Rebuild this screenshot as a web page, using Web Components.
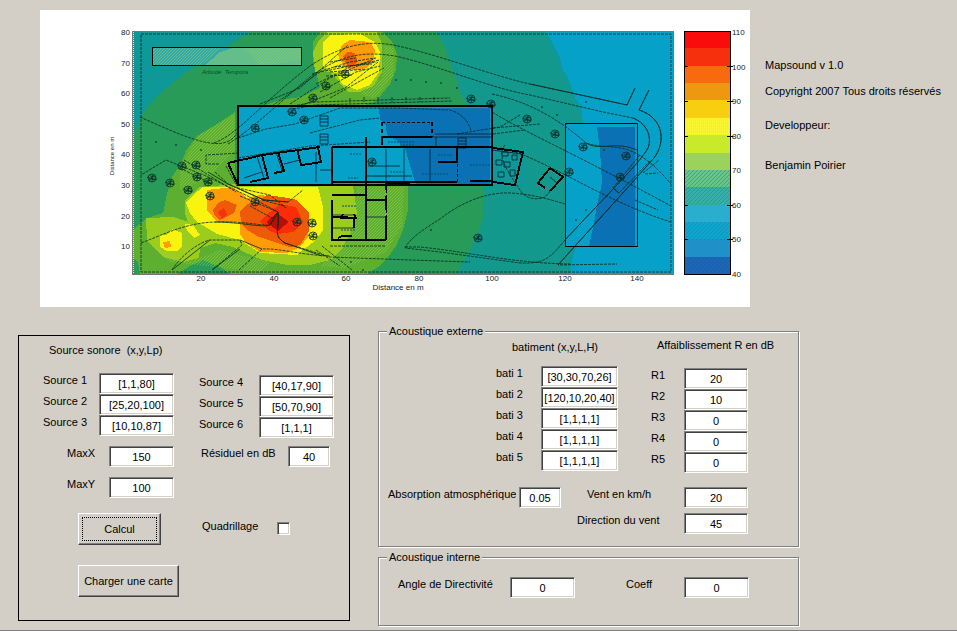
<!DOCTYPE html>
<html lang="fr">
<head>
<meta charset="utf-8">
<title>Mapsound</title>
<style>
  body {
    margin: 0;
    background: #d3cfc6;
    color: #000;
    font: 11px/14px "Liberation Sans", Arial, sans-serif;
  }
</style>
</head>
<body>
<mapsound-app></mapsound-app>

<script>
const sharedStyle = `
:host { display: block; box-sizing: border-box; }
* { box-sizing: border-box; }
`;

function ensure(name, ctor) {
  if (!customElements.get(name)) {
    customElements.define(name, ctor);
  }
}

/* label + text box, or label + tick box with type="checkbox" */
class SoundField extends HTMLElement {
  constructor() {
    super();
    const root = this.attachShadow({ mode: "open" });
    root.innerHTML = `
      <style>
        ${sharedStyle}
        :host { display: flex; align-items: flex-start; }
        label { flex: none; width: var(--label-width, 56px); white-space: nowrap; }
        input {
          appearance: none;
          margin: 0;
          border: 1px solid;
          border-color: #808080 #fff #fff #808080;
          border-radius: 0;
          box-shadow: inset 1px 1px #404040, inset -1px -1px #d4d0c8;
          background: #fff;
        }
        input[type="text"] {
          width: var(--field-width, 75px);
          height: 21px;
          padding: 0 1px;
          font: inherit;
          color: inherit;
          text-align: center;
        }
        input[type="checkbox"] { width: 13px; height: 13px; margin-top: 3px; }
        input[type="checkbox"]:checked { background: #404040; }
      </style>
      <label for="field"></label><input id="field">
    `;
    this.input = root.querySelector("input");
    this.label = root.querySelector("label");
  }
  connectedCallback() {
    this.label.textContent = this.getAttribute("label") || "";
    this.input.type = this.getAttribute("type") || "text";
    if (this.input.type === "text") {
      this.input.value = this.getAttribute("value") || "";
    }
  }
}

class SoundButton extends HTMLElement {
  constructor() {
    super();
    const root = this.attachShadow({ mode: "open" });
    root.innerHTML = `
      <style>
        ${sharedStyle}
        button {
          width: var(--button-width, 101px);
          height: 32px;
          padding: 3px;
          border: 1px solid;
          border-color: #fff #404040 #404040 #fff;
          border-radius: 0;
          box-shadow: inset -1px -1px #808080;
          background: #d3cfc6;
          color: inherit;
          font: inherit;
          white-space: nowrap;
          display: block;
        }
        span { display: flex; align-items: center; justify-content: center; height: 24px; }
        :host([current]) span { border: 1px dotted #000; }
      </style>
      <button type="button"><span><slot></slot></span></button>
    `;
  }
}

class SoundGroup extends HTMLElement {
  constructor() {
    super();
    const root = this.attachShadow({ mode: "open" });
    root.innerHTML = `
      <style>
        ${sharedStyle}
        fieldset {
          margin: 0;
          min-width: 0;
          padding: 0 9px var(--group-bottom, 12px);
          border: 1px solid #808080;
          box-shadow: 1px 1px #fff, inset 1px 1px #fff;
        }
        legend { padding: 0 2px; margin-left: -1px; background: #d3cfc6; }
      </style>
      <fieldset><legend></legend><slot></slot></fieldset>
    `;
  }
  connectedCallback() {
    this.shadowRoot.querySelector("legend").textContent = this.getAttribute("legend");
  }
}

/* noise level bands, lowest first */
const areas = [
  ["#289b58", "133,32 673,32 673,274 133,274"],
  ["#0f9898", "133,32 250,32 240,38 228,46 214,54 200,64 182,75 168,87 158,95 150,104 143,113 137,125 133,136"],
  ["#0f9898", "436,32 442,42 447,52 450,64 456,78 460,92 467,105 483,160 483,217 478,234 470,250 463,262 457,274 673,274 673,32"],
  ["#06a1c8", "546,32 553,44 560,58 562,68 568,78 572,88 575,98 581,106 583,123 584,180 577,245 573,256 570,274 673,274 673,32"],
  ["#5db02f", "235,112 235,186 408,186 408,210 403,230 396,246 388,257 378,267 367,274 230,274 220,267 203,260 190,266 177,274 140,274 138,262 133,258 133,230 147,218 163,213 167,194 172,177 180,165 187,150 185,152 197,136 214,126"],
  ["#5db02f", "262,106 280,100 300,97 320,88 313,60 313,42 320,32 382,32 392,42 397,54 396,70 390,84 382,94 373,103 360,106"],
  ["#9ccc1c", "313,52 318,42 327,32 377,32 382,44 382,72 373,86 360,92 348,92 330,72 315,72"],
  ["#9ccc1c", "185,200 200,187 238,184 353,186 357,213 351,232 343,247 330,260 310,265 287,265 262,260 233,247 215,243 200,248 199,258 183,262 163,257 147,240 146,218 173,217 188,222 185,213"],
  ["#f8f410", "323,42 330,35 360,34 375,42 380,52 379,72 370,85 357,90 342,84 337,74 323,66"],
  ["#f8f410", "186,203 192,196 203,187 318,187 323,207 323,230 316,240 303,250 297,255 260,253 240,240 217,234 204,226 197,222 190,213"],
  ["#f8f410", "160,235 166,235 172,229 182,233 182,246 178,251 167,251 160,247"],
  ["#f8f410", "185,224 192,224 200,235 194,238 187,230"],
  ["#ff9c08", "338,55 342,45 350,40 370,42 375,50 373,62 366,68 355,70 345,68 340,60"],
  ["#ff9c08", "207,190 233,187 247,198 260,195 297,200 309,213 308,237 300,247 287,253 260,252 246,243 240,234 240,222 217,222 207,210"],
  ["#ff9c08", "163,242 170,241 171,247 165,248"],
  ["#ee5a08", "343,56 348,52 355,53 358,62 351,67 346,64"],
  ["#ee5a08", "213,210 219,202 225,200 237,205 234,213 220,220 215,216"],
  ["#fa3008", "218,212 224,208 227,214 222,219"],
  ["#ee5a08", "240,212 247,204 257,202 267,195 282,197 297,200 309,213 309,231 300,245 290,247 277,243 257,236 246,229 241,222"],
  ["#fc2c08", "260,221 270,212 280,204 296,207 303,222 293,232 277,234 268,230"],
  ["#b41008", "266,222 277,213 289,222 278,231"],
  ["#06a1c8", "238,106 492,106 492,185 238,185"],
  ["#0a72b4", "379,108 490,108 490,185 416,185 412,172 405,148 396,140 387,135 386,126 380,120"],
  ["#06a1c8", "566,124 637,124 637,246 566,246"],
  ["#0a72b4", "597,127 635,127 635,246 589,246 594,223 597,205 602,183 600,150"],
  ["#63be8a", "152,47 302,47 302,66 152,66"],
  ["#35a8a8", "152,47 236,47 220,52 204,66 152,66"],
];

/* areas with a diagonal hatch */
const hatched = [
  "153,48 222,48 200,66 153,66",
  "245,48 301,48 301,60 260,66",
  "197,136 235,114 235,150 208,178 180,190 180,170",
  "150,245 190,262 220,250 270,262 260,272 170,262",
  "357,187 404,187 402,225 386,252 345,268 320,266 350,240",
  "360,94 382,78 384,45 394,48 393,76 375,98",
];

const speckled = [
  "437,33 545,33 582,123 566,124 566,246 570,273 458,273 484,217 484,186 525,186 525,150 492,148 492,106 467,104",
];

/* site plan, thin strokes */
const roads = `
  M141,34H671V272H141Z
  M214,143C240,133 260,104 310,66C340,46 365,40 393,45C430,52 500,78 530,84L627,105L635,88
  M228,144C254,128 282,100 310,77C336,58 358,50 395,56C440,66 490,88 530,95L603,112L633,118C648,124 652,138 648,148C640,162 623,178 565,240C550,258 545,264 520,263L440,252L405,248
  M649,90L639,110C664,118 666,142 654,158L630,185L558,265L617,264
  M140,117C165,128 190,140 210,143S235,136 238,132
  M141,243C165,234 185,223 215,222S262,226 270,225L278,212L256,200L206,176L166,160L141,175
  M278,212C280,230 272,235 285,243L330,257L410,260L470,262
  M172,270C182,254 200,242 210,240H240L242,245L212,270
  M239,270L262,249C280,248 300,255 330,256
  M330,246H385M316,250L340,266M322,246L352,270
  M405,248C410,238 424,229 440,219C464,200 490,192 510,193S545,198 565,204
  M405,247H420C470,252 510,263 570,264
  M492,112C530,135 560,146 671,206M500,148C540,155 600,200 671,222
  M492,94C530,102 560,120 586,143C612,152 630,135 671,184
  M238,138L266,129L295,124L340,108L400,108L450,110C466,115 470,126 471,131
  M310,133L360,120L380,118M238,158L310,146L370,142
  M215,172L228,184L264,200L288,202L303,190M226,166L238,188L270,195L286,208
  M240,196L278,212L272,218L250,206M262,200L285,206
  M493,134L525,130M493,128L540,124M457,134L500,127L520,115
  M640,155L613,188L619,193L651,160M643,173L659,160M645,174L658,173M635,200L658,210
  M505,145C494,156 514,180 520,190S538,200 545,197L560,180
  M260,104L300,88L348,45M272,106L320,72L380,60M290,104L330,78L376,58M300,106L345,88L378,62
  M312,74L350,62L375,58M316,84L352,66L376,62M320,92L356,72L380,66M330,98L362,80L384,68
  M330,62L356,58M334,67L372,64M330,72L366,69M326,76L352,75
  M293,106L315,102L450,98M293,109L315,105L452,101M350,98v5M364,97v5M378,97v5M392,97v5M406,97v5M420,97v5M434,97v5
  M219,164H206V155L240,153M180,168L212,184M184,160L236,192
`;

/* kerbs and banks that read as solid lines */
const solid = `
  M530,84L627,105L635,88M649,90L639,110C664,118 666,142 654,158L630,185L558,265
  M633,118C648,124 652,138 648,148C640,162 623,178 565,240
  M215,222C240,222 262,228 270,225L278,212M278,212C280,230 272,235 285,243L322,256
  M586,143C600,152 615,140 637,150M613,188L619,193M208,172L228,184L264,200L288,202
  M240,240L262,249M210,240L172,270M240,249L212,270
`;

const thinWalls = `
  M382,137H492M435,134H492M436,137V147M366,137V147
  M368,166H400M366,176H412M386,149V182M404,149V182M430,149V182
  M332,215H356M332,228H354M354,218V228M366,200H386M366,217H386
  M257,156L264,178M276,152L282,170M297,150L302,166M244,178L262,172M284,164L300,160
  M320,170H332M316,152V182M492,150L522,154M496,160h6v5h-6zM504,162h6v5h-6zM498,172h6v5h-6zM510,170h5v6h-5zM502,152h6v4h-6zM512,155h5v5h-5z
  M320,116h8v10h-8zM320,134h8v10h-8zM320,119h8M320,122h8M320,137h8M320,140h8
  M458,138h8v10h-8zM458,141h8M458,144h8M550,177L557,183
`;

const walls = `
  M332,147H457V162H438M457,147H492M332,147V185M366,147V240M332,182H457M366,137V147
  M382,137H432M382,145V137
  M228,163L250,158L262,155L320,147M228,163L238,185M262,155L268,178L250,182M278,152L284,171L274,173M297,149L301,165L310,164M318,147L321,162L309,164
  M332,195H366M332,200V240H386M386,183V190M386,196V210M386,216V240M366,200H386
  M332,217H348M354,217V228M343,214L341,218H356L354,214M338,238L342,236H352
  M493,148L523,152L515,185L493,182M386,183H410M470,181H492
  M550,168L563,177L550,191M550,168L538,183L545,188
`;

const trees = [
  [182, 166], [196, 165], [152, 178], [170, 183], [188, 190], [210, 196], [197, 177], [208, 182],
  [255, 128], [304, 120], [292, 112], [326, 86], [313, 98], [491, 104], [471, 99], [527, 119],
  [555, 134], [583, 147], [626, 156], [620, 177], [478, 238], [297, 222], [312, 223], [255, 202],
  [345, 74], [569, 172], [313, 236], [372, 162],
];

const scale = [
  "#fa0c0c", "#f62f0c", "#f76a0e", "#ee980f", "#f8cf10", "#f7f412", "#c8ea2a",
  "#9ad25c", "#68c488", "#35b0a4", "#2aaed0", "#12a4cc", "#2090c8", "#1a62b4",
];

const textRow = (values, x, y, dx, dy, anchor) => values
  .map((v, i) => `<text x="${Math.round(x + i * dx)}" y="${Math.round(y + i * dy)}" text-anchor="${anchor}">${v}</text>`)
  .join("");

class SoundMap extends HTMLElement {
  constructor() {
    super();
    const root = this.attachShadow({ mode: "open" });
    const band = 243 / scale.length;
    root.innerHTML = `
      <style>
        ${sharedStyle}
        :host { background: #fff; }
        svg { display: block; width: 100%; height: auto; }
        text { font-family: "Liberation Sans", Arial, sans-serif; font-size: 8px; fill: #222; }
        .note { font-size: 6px; font-style: italic; fill: #0d4a30; }
        .side { font-size: 6px; }
        .line { fill: none; stroke: #022820; stroke-width: 0.8; }
        .dash { stroke-dasharray: 3 1; }
        .plan { stroke: #021c30; }
        .wall { fill: none; stroke: #000; stroke-width: 2; shape-rendering: crispEdges; }
        .box { fill: none; stroke: #000; shape-rendering: crispEdges; }
      </style>
      <svg viewBox="40 10 710 297" role="img" aria-label="Carte de bruit">
        <defs>
          <pattern id="hatch" width="3" height="3" patternUnits="userSpaceOnUse">
            <path d="M0,3L3,0" stroke="#a6d860" stroke-width="0.7" opacity="0.6"/>
          </pattern>
          <pattern id="speck" width="4" height="4" patternUnits="userSpaceOnUse">
            <path d="M0,1h1M2,3h1" stroke="#289b58" opacity="0.7"/>
          </pattern>
          <pattern id="grain" width="4" height="3" patternUnits="userSpaceOnUse">
            <path d="M0,1h1M2,2h1" stroke="#fff" opacity="0.4"/>
          </pattern>
          <pattern id="weave" width="4" height="4" patternUnits="userSpaceOnUse">
            <path d="M0,4L4,0" stroke="#2278a8" stroke-width="0.8" opacity="0.6"/>
          </pattern>
          <g id="tree" fill="none" stroke="#04302c" stroke-width="0.8">
            <circle r="4"/><path d="M-5,-1L4,2M-3,3L2,-4M-2,-2L4,-1M-3,1H5M0,4L1,-3"/>
          </g>
        </defs>
        <g shape-rendering="crispEdges">
          ${areas.map(([fill, points]) => `<polygon fill="${fill}" points="${points}"/>`).join("")}
        </g>
        ${hatched.map((points) => `<polygon fill="url(#hatch)" points="${points}"/>`).join("")}
        ${speckled.map((points) => `<polygon fill="url(#speck)" points="${points}"/>`).join("")}
        <path class="line dash" d="${roads}"/>
        <path class="line" d="${solid}"/>
        <path class="line plan" d="${thinWalls}"/>
        <path class="wall" d="${walls}"/>
        <path class="wall" stroke-dasharray="4 3" d="M382,122V137M432,122V137"/>
        <path class="box" stroke-dasharray="3 2" d="M382,122H432M457,164V182M386,190V240"/>
        ${trees.map(([x, y]) => `<use href="#tree" x="${x}" y="${y}"/>`).join("")}
        <path d="M395,80h2M410,80h2M425,82h2M440,83h2M456,88h2M155,142h2M175,145h2M200,150h2M541,107h2M556,115h2M565,124h2M585,102h2M603,150h2M575,220h2M585,210h2M430,230h2M350,262h2M362,270h2" stroke="#022"/>
        <path d="M350,154h12M348,178h10M342,206h14M341,230h15M388,142h26M400,145h14M390,172h14M422,174h26M438,155h14M470,165h24M374,176h18" stroke="#035070" stroke-dasharray="2 1"/>
        <path class="wall" d="M238,106H492V185H238Z"/>
        <path class="box" d="M152.500,47.500H301.500V65.500H152.500Z"/>
        <path class="box" d="M565.500,123.500H637.500V246.500H565.500Z"/>
        <path d="M133.500,32V274" stroke="#dfe6d0" stroke-dasharray="1 1"/>
        <path class="box" style="stroke:#777" d="M132.500,31.500H673.500V274.500H132.500Z"/>
        <text class="note" x="202" y="74" xml:space="preserve">Arbode  Tempora</text>

        <g shape-rendering="crispEdges">
          ${scale.map((fill, i) => `<rect x="684" y="${31 + i * band}" width="47" height="${band + 1}" fill="${fill}"/>`).join("")}
          <rect x="684" y="118" width="47" height="17" fill="url(#grain)"/>
          <rect x="684" y="170" width="47" height="35" fill="url(#weave)"/>
          <rect x="684" y="222" width="47" height="18" fill="url(#weave)"/>
          <rect x="684" y="257" width="47" height="17" fill="url(#weave)"/>
          <path class="box" d="M684.500,31.500H730.500V274.500H684.500ZM684,66.500h4M684,101.500h4M684,136.500h4M684,205.500h4M684,239.500h4M727,66.500h6M727,101.500h6M727,136.500h6M727,205.500h6M727,239.500h6"/>
        </g>
        ${textRow([110, 100, 90, 80, 70, 60, 50, 40], 732, 35, 0, 34.5, "start")}
        ${textRow([80, 70, 60, 50, 40, 30, 20, 10], 130, 35, 0, 30.6, "end")}
        ${textRow([20, 40, 60, 80, 100, 120, 140], 201, 281, 72.7, 0, "middle")}
        <text x="398" y="290" text-anchor="middle">Distance en m</text>
        <text class="side" transform="translate(114 156) rotate(-90)" text-anchor="middle">Distance en m</text>
      </svg>
    `;
  }
}

class MapsoundApp extends HTMLElement {
  constructor() {
    super();
    const root = this.attachShadow({ mode: "open" });
    root.innerHTML = `
      <style>
        ${sharedStyle}
        :host { min-height: 100vh; padding-top: 10px; border-bottom: 1px solid #808080; }
        p, h2 { margin: 0; font: inherit; white-space: nowrap; }
        .top { display: flex; padding-left: 40px; }
        sound-map { flex: 1; min-width: 0; }
        .about { flex: none; width: 207px; padding: 48px 0 0 15px; }
        .about p + p { margin-top: 12px; }
        .about .role { margin-top: 20px; }
        .about .name { margin-top: 26px; }
        .panels {
          display: grid;
          grid-template-columns: minmax(332px, 332fr) minmax(421px, 421fr);
          column-gap: 28px;
          align-items: start;
          padding: 17px 158px 4px 18px;
        }
        .sources { margin-top: 11px; padding: 7px 14px 23px 24px; border: 1px solid #000; }
        .sources h2 { margin-left: 6px; }
        .columns { display: grid; grid-template-columns: 156px 1fr; margin-top: 16px; }
        .second { padding-top: 2px; --label-width: 60px; }
        .size { display: grid; gap: 10px; margin: 10px 0 15px 24px; --label-width: 42px; --field-width: 65px; }
        .actions { display: grid; gap: 20px; margin-left: 35px; }
        .residual { margin: 8px 0 0 2px; --label-width: 87px; --field-width: 42px; }
        .grid { margin: 52px 0 0 3px; --label-width: 75px; }
        .groups { display: grid; gap: 3px; }
        .external { display: grid; grid-template-columns: 155px 1fr; padding-left: 108px; }
        .buildings { padding-top: 2px; --label-width: 45px; --field-width: 77px; }
        .buildings h2 { margin: 0 0 12px 16px; }
        .losses { --label-width: 33px; --field-width: 64px; }
        .losses h2 { margin: 0 0 16px 6px; }
        .air { display: grid; grid-template-columns: 189px 1fr; padding-top: 14px; --label-width: 131px; --field-width: 42px; }
        .wind { display: grid; gap: 5px; --label-width: 107px; --field-width: 64px; }
        .speed { padding-left: 10px; --label-width: 97px; }
        .internal { --group-bottom: 27px; --field-width: 65px; }
        .inner { display: grid; grid-template-columns: 228px 1fr; padding: 13px 0 0 10px; }
        .angle { --label-width: 112px; }
        .coeff { --label-width: 58px; }
      </style>
      <div class="top">
        <sound-map></sound-map>
        <div class="about">
          <p>Mapsound v 1.0</p>
          <p>Copyright 2007 Tous droits réservés</p>
          <p class="role">Developpeur:</p>
          <p class="name">Benjamin Poirier</p>
        </div>
      </div>
      <main class="panels">
        <section class="sources">
          <h2>Source sonore &nbsp;(x,y,Lp)</h2>
          <div class="columns">
            <div>
              <sound-field label="Source 1" value="[1,1,80]"></sound-field>
              <sound-field label="Source 2" value="[25,20,100]"></sound-field>
              <sound-field label="Source 3" value="[10,10,87]"></sound-field>
              <div class="size">
                <sound-field label="MaxX" value="150"></sound-field>
                <sound-field label="MaxY" value="100"></sound-field>
              </div>
              <div class="actions">
                <sound-button current style="--button-width: 83px">Calcul</sound-button>
                <sound-button>Charger une carte</sound-button>
              </div>
            </div>
            <div class="second">
              <sound-field label="Source 4" value="[40,17,90]"></sound-field>
              <sound-field label="Source 5" value="[50,70,90]"></sound-field>
              <sound-field label="Source 6" value="[1,1,1]"></sound-field>
              <sound-field class="residual" label="Résiduel en dB" value="40"></sound-field>
              <sound-field class="grid" type="checkbox" label="Quadrillage"></sound-field>
            </div>
          </div>
        </section>
        <div class="groups">
          <sound-group legend="Acoustique externe">
            <div class="external">
              <div class="buildings">
                <h2>batiment (x,y,L,H)</h2>
                <sound-field label="bati 1" value="[30,30,70,26]"></sound-field>
                <sound-field label="bati 2" value="[120,10,20,40]"></sound-field>
                <sound-field label="bati 3" value="[1,1,1,1]"></sound-field>
                <sound-field label="bati 4" value="[1,1,1,1]"></sound-field>
                <sound-field label="bati 5" value="[1,1,1,1]"></sound-field>
              </div>
              <div class="losses">
                <h2>Affaiblissement R en dB</h2>
                <sound-field label="R1" value="20"></sound-field>
                <sound-field label="R2" value="10"></sound-field>
                <sound-field label="R3" value="0"></sound-field>
                <sound-field label="R4" value="0"></sound-field>
                <sound-field label="R5" value="0"></sound-field>
              </div>
            </div>
            <div class="air">
              <sound-field label="Absorption atmosphérique" value="0.05"></sound-field>
              <div class="wind">
                <sound-field class="speed" label="Vent en km/h" value="20"></sound-field>
                <sound-field label="Direction du vent" value="45"></sound-field>
              </div>
            </div>
          </sound-group>
          <sound-group class="internal" legend="Acoustique interne">
            <div class="inner">
              <sound-field class="angle" label="Angle de Directivité" value="0"></sound-field>
              <sound-field class="coeff" label="Coeff" value="0"></sound-field>
            </div>
          </sound-group>
        </div>
      </main>
    `;
  }
}

ensure("sound-field", SoundField);
ensure("sound-button", SoundButton);
ensure("sound-group", SoundGroup);
ensure("sound-map", SoundMap);
ensure("mapsound-app", MapsoundApp);
</script>
</body>
</html>
